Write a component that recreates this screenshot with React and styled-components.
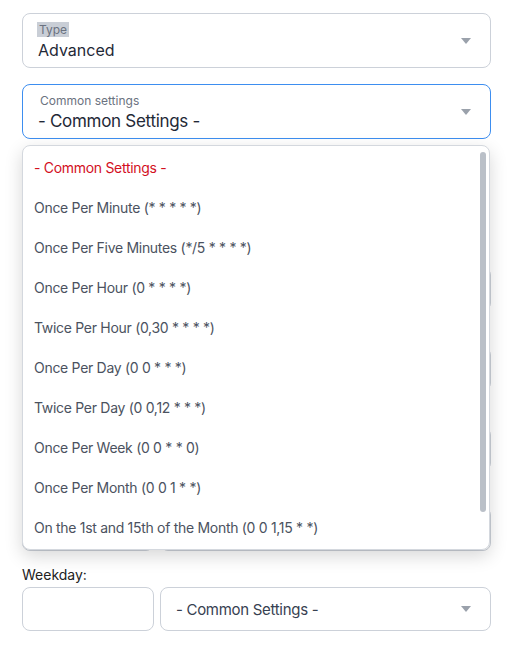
import React from 'react'
import styled, { createGlobalStyle } from 'styled-components'

const GlobalStyle = createGlobalStyle`
  html, body { margin: 0; padding: 0; background: #fff; }
  body { font-family: Inter, "Noto Sans", sans-serif; color: #1f2937; }
`

const Page = styled.div`
  width: 469px;
  padding: 13px 0 0 22px;
  display: flex;
  flex-direction: column;
`

const Field = styled.div`
  position: relative;
  height: 55px;
  box-sizing: border-box;
  border: 1px solid ${p => (p.$focus ? '#3d8ef0' : '#ccd1d9')};
  border-radius: 8px;
  background: #fff;
  padding: 8px 44px 0 15px;
  display: flex;
  flex-direction: column;
  margin-bottom: ${p => p.$mb || 0}px;
`

const SmallLabel = styled.span`
  align-self: flex-start;
  font-size: 12px;
  line-height: 15px;
  color: #6b7280;
  background: ${p => (p.$mark ? '#c9ced6' : 'transparent')};
  padding: 0 ${p => (p.$mark ? '2px' : '0')};
  margin-left: ${p => (p.$mark ? '-1px' : '2px')};
`

const Value = styled.span`
  font-size: ${p => p.$size || 16}px;
  letter-spacing: ${p => p.$ls || 0}px;
  line-height: 24px;
  color: #1f2937;
  margin-top: 1px;
`

const Caret = styled.span`
  position: absolute;
  right: 19px;
  top: 50%;
  margin-top: -3px;
  width: 0;
  height: 0;
  border-left: 5px solid transparent;
  border-right: 5px solid transparent;
  border-top: 6px solid #9aa1ab;
`

const Anchor = styled.div`
  position: relative;
`

const Menu = styled.div`
  position: absolute;
  top: 61px;
  left: 0;
  width: 468px;
  height: 405px;
  box-sizing: border-box;
  background: #fff;
  border: 1px solid #d4d8de;
  border-radius: 8px;
  box-shadow: 0 6px 18px rgba(0, 0, 0, 0.16);
  z-index: 5;
  overflow: hidden;
  display: flex;
`

const List = styled.ul`
  list-style: none;
  margin: 0;
  padding: 1px 0 0 0;
  flex: 1;
`

const Item = styled.li`
  height: 40px;
  padding-left: 11px;
  display: flex;
  align-items: center;
  font-size: 14px;
  letter-spacing: -0.3px;
  color: ${p => (p.$active ? '#d3101e' : '#4b5260')};
`

const Scrollbar = styled.div`
  width: 6px;
  margin: 6px 3px 0 0;
  height: 360px;
  border-radius: 3px;
  background: #bac0c8;
`

const Rows = styled.div`
  display: flex;
  flex-direction: column;
  margin-top: 106px;
`

const Row = styled.div`
  display: flex;
  flex-direction: column;
  margin-bottom: 14px;
`

const RowLabel = styled.label`
  height: 20px;
  font-size: 14px;
  line-height: 20px;
  color: #222;
  margin-bottom: 2px;
`

const Inputs = styled.div`
  display: flex;
  gap: 6px;
`

const Box = styled.div`
  position: relative;
  height: 44px;
  box-sizing: border-box;
  border: 1px solid #ccd1d9;
  border-radius: 8px;
  background: #fff;
  width: ${p => (p.$grow ? 'auto' : '132px')};
  flex: ${p => (p.$grow ? 1 : 'none')};
  display: flex;
  align-items: center;
  padding-left: 15px;
  font-size: 15px;
  letter-spacing: -0.3px;
  color: #374151;
`

const options = [
  '- Common Settings -',
  'Once Per Minute (* * * * *)',
  'Once Per Five Minutes (*/5 * * * *)',
  'Once Per Hour (0 * * * *)',
  'Twice Per Hour (0,30 * * * *)',
  'Once Per Day (0 0 * * *)',
  'Twice Per Day (0 0,12 * * *)',
  'Once Per Week (0 0 * * 0)',
  'Once Per Month (0 0 1 * *)',
  'On the 1st and 15th of the Month (0 0 1,15 * *)',
]

// rows under the open menu are covered, only the last one shows its text
const rows = [
  { key: 'minute' },
  { key: 'hour' },
  { key: 'day' },
  { key: 'month' },
  { key: 'weekday', label: 'Weekday:', value: '- Common Settings -' },
]

export default function App() {
  return (
    <Page>
      <GlobalStyle />
      <Field $mb={16}>
        <SmallLabel $mark>Type</SmallLabel>
        <Value>Advanced</Value>
        <Caret />
      </Field>
      <Anchor>
        <Field $focus>
          <SmallLabel>Common settings</SmallLabel>
          <Value $size={17} $ls={-0.3}>- Common Settings -</Value>
          <Caret />
        </Field>
        <Menu>
          <List>
            {options.map((o, i) => (
              <Item key={o} $active={i === 0}>{o}</Item>
            ))}
          </List>
          <Scrollbar />
        </Menu>
      </Anchor>
      <Rows>
        {rows.map(r => (
          <Row key={r.key}>
            <RowLabel>{r.label}</RowLabel>
            <Inputs>
              <Box />
              <Box $grow>
                {r.value}
                <Caret />
              </Box>
            </Inputs>
          </Row>
        ))}
      </Rows>
    </Page>
  )
}
